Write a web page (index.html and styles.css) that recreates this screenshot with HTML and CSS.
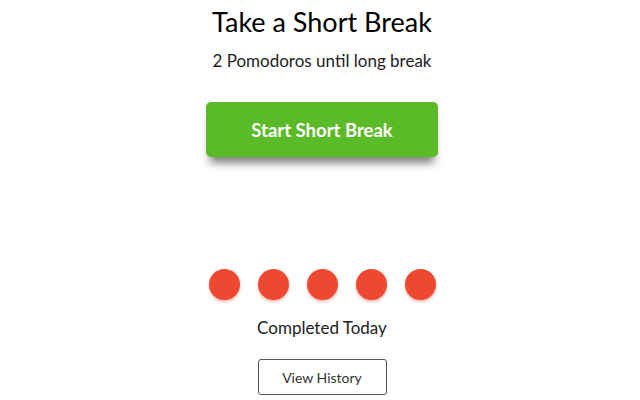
FILE: index.html
```html
<!DOCTYPE html>
<html>
<head>
<meta charset="utf-8">
<link rel="stylesheet" href="styles.css">
</head>
<body>
<main class="page">
  <h1 class="title">Take a Short Break</h1>
  <p class="subtitle">2 Pomodoros until long break</p>
  <button class="start-btn">Start Short Break</button>
  <div class="dots">
    <span class="dot"></span>
    <span class="dot"></span>
    <span class="dot"></span>
    <span class="dot"></span>
    <span class="dot"></span>
  </div>
  <p class="completed">Completed Today</p>
  <button class="history-btn">View History</button>
</main>
</body>
</html>
```
FILE: styles.css
```css
html, body {
  margin: 0;
  padding: 0;
  background: #fff;
}
body {
  font-family: "Lato", "Open Sans", sans-serif;
  color: #111;
}
.page {
  display: flex;
  flex-direction: column;
  align-items: center;
  width: 636px;
  padding-left: 4px;
}
.title {
  margin: 4px 0 0;
  font-size: 27px;
  font-weight: 400;
  line-height: 36px;
  color: #000;
}
.subtitle {
  margin: 10px 0 0;
  font-size: 17px;
  line-height: 22px;
  color: #222;
}
.start-btn {
  margin-top: 30px;
  width: 232px;
  height: 55px;
  border: none;
  border-radius: 5px;
  background: #5bba27;
  color: #fff;
  font-family: inherit;
  font-size: 18.5px;
  font-weight: 700;
  box-shadow: 0 10px 8px -4px rgba(0,0,0,0.5);
}
.dots {
  display: flex;
  gap: 18px;
  margin-top: 112px;
}
.dot {
  width: 31px;
  height: 31px;
  border-radius: 50%;
  background: #ee4830;
  box-shadow: 0 2px 3px rgba(238,72,48,0.35);
}
.completed {
  margin: 17px 0 0;
  font-size: 17px;
  line-height: 22px;
  color: #222;
}
.history-btn {
  margin-top: 20px;
  width: 129px;
  height: 36px;
  border: 1px solid #555;
  border-radius: 3px;
  background: #fff;
  color: #333;
  font-family: inherit;
  font-size: 14px;
}
```
